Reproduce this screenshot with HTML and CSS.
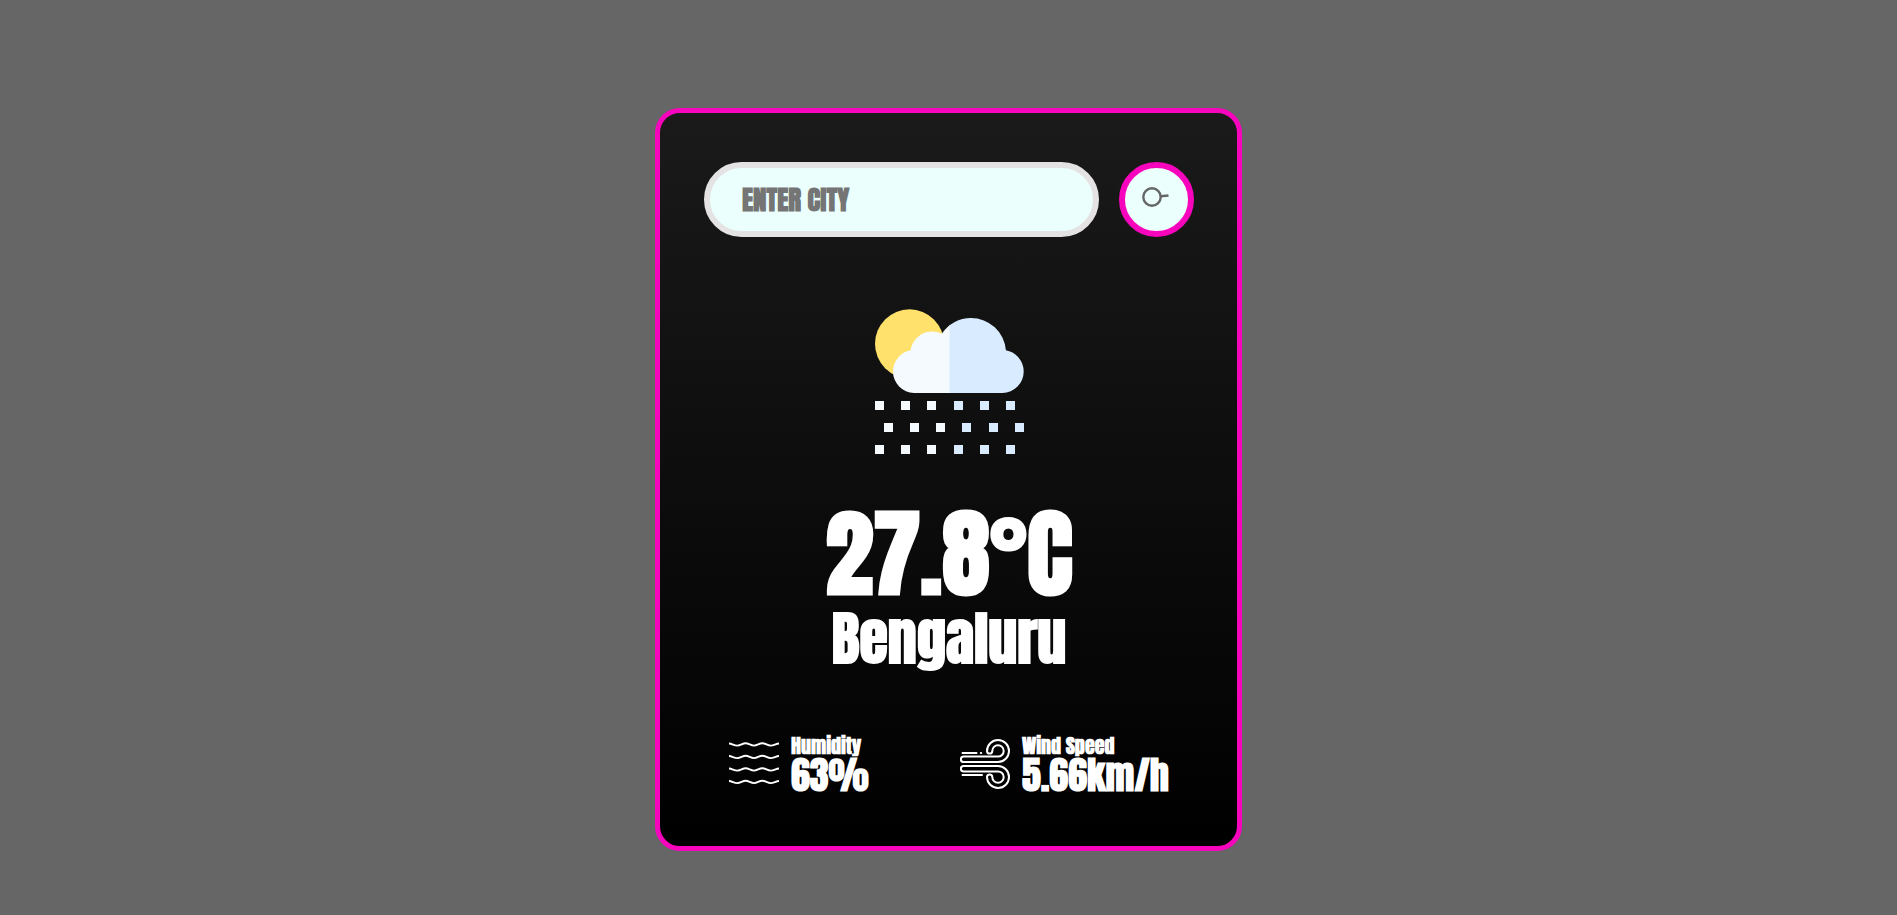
FILE: index.html
```
<!DOCTYPE html>
<html lang="en">
<head>
<meta charset="utf-8">
<title>Weather</title>
<link rel="stylesheet" href="styles.css">
</head>
<body>
<main class="card">
  <form class="search">
    <input class="search-input" type="text" placeholder="ENTER CITY" aria-label="City" spellcheck="false">
    <button class="search-button" type="button" aria-label="Search">
      <svg class="search-icon" viewBox="0 0 27 20" aria-hidden="true">
        <circle cx="10" cy="10" r="8.700"/>
        <path d="M18.700 9.300L26.500 8.500"/>
      </svg>
    </button>
  </form>
  <section class="weather">
    <svg class="weather-icon" viewBox="0 0 149 150" aria-hidden="true">
      <defs>
        <clipPath id="cloud">
          <circle cx="39.500" cy="62.500" r="21.500"/>
          <circle cx="57" cy="44" r="21.500"/>
          <circle cx="96" cy="44" r="35"/>
          <circle cx="127.200" cy="62.500" r="21.500"/>
          <rect x="39" y="42" width="88.500" height="42"/>
        </clipPath>
      </defs>
      <circle cx="34.500" cy="34.800" r="34.500" fill="#ffe16b"/>
      <g clip-path="url(#cloud)">
        <rect width="75" height="90" fill="#f5fafe"/>
        <rect x="74.500" width="75" height="90" fill="#d9ecff"/>
      </g>
      <path fill="#f5fafe" d="M0 92h9v9H0zM26 92h9v9h-9zM52 92h9v9h-9zM9 114h9v9H9zM35 114h9v9h-9zM61 114h9v9h-9zM0 136h9v9H0zM26 136h9v9h-9zM52 136h9v9h-9z"/>
      <path fill="#d9ecff" d="M79 92h9v9h-9zM105 92h9v9h-9zM131 92h9v9h-9zM87 114h9v9h-9zM114 114h9v9h-9zM140 114h9v9h-9zM79 136h9v9h-9zM105 136h9v9h-9zM131 136h9v9h-9z"/>
    </svg>
    <h1 class="temp">27.8°C</h1>
    <h2 class="city">Bengaluru</h2>
  </section>
  <section class="details">
    <div class="detail">
      <svg class="detail-icon" viewBox="0 0 50 50" aria-hidden="true">
        <g fill="none" stroke="#fff" stroke-width="1.900">
          <path id="wave" d="M0 4.500C3 4.500 5 6.600 8.300 6.600S13.500 4.300 16.600 4.300S21.700 6.600 25 6.600S30 4.300 33.300 4.300S38.400 6.600 41.600 6.600S47 4.500 50 4.500"/>
          <use href="#wave" y="12.500"/><use href="#wave" y="25"/><use href="#wave" y="37.500"/>
        </g>
      </svg>
      <div><p class="label">Humidity</p><p class="value">63%</p></div>
    </div>
    <div class="detail">
      <svg class="detail-icon" viewBox="0 0 50 50" aria-hidden="true">
        <g fill="none" stroke="#fff" stroke-width="2" stroke-linecap="round" stroke-linejoin="round">
          <path id="gust" d="M38 23H3.600A2.700 2.700 0 0 1 3.600 17.600H38A5.700 5.700 0 1 0 32.300 11.900C32.300 15.500 27 15.500 27 11.900A11 11 0 1 1 38 23"/>
          <use href="#gust" transform="matrix(1 0 0 -1 0 50)"/>
          <path d="M2.500 14H16.500M20.800 14H21.200M2.500 36H22"/>
        </g>
      </svg>
      <div><p class="label">Wind Speed</p><p class="value">5.66km/h</p></div>
    </div>
  </section>
</main>
</body>
</html>
```
FILE: styles.css
```
* { box-sizing: border-box; margin: 0; padding: 0; }
body {
  min-height: 100vh;
  padding: 108px 24px 48px;
  background: #666;
  color: #fff;
  font-family: Impact, "Anton", "Roboto Condensed", "Liberation Sans Narrow", sans-serif;
  font-weight: 700;
}
.card {
  width: 100%;
  max-width: 587px;
  margin: 0 auto;
  padding: 49px 43px 53px 44px;
  border: 5px solid #f705bd;
  border-radius: 25px;
  background: linear-gradient(#1a1a1a, #000);
  text-align: center;
}
.search { display: flex; align-items: center; gap: 20px; }
.search-input {
  flex: 1;
  min-width: 0;
  height: 75px;
  padding: 0 32px;
  border: 6px solid #e4e2e2;
  border-radius: 38px;
  background: #ebfffc;
  color: #555;
  font: inherit;
  font-size: 27px;
}
.search-input::placeholder { color: #757575; opacity: 1; }
.search-button {
  display: grid;
  place-items: center;
  width: 75px;
  height: 75px;
  padding: 0 3px 5px 0;
  border: 6px solid #f705bd;
  border-radius: 50%;
  background: #ebfffc;
}
.search-icon { width: 27px; height: 20px; fill: none; stroke: #666; stroke-width: 2.4; }
.weather-icon { display: block; width: 149px; height: 150px; margin: 72px auto 0; }
.temp { margin-top: 35px; font-size: 96px; line-height: 120px; }
.city { font-size: 58px; line-height: 50px; }
.details { display: flex; justify-content: space-between; margin-top: 71px; padding: 0 25px; text-align: left; }
.detail { display: flex; align-items: center; gap: 12px; }
.detail-icon { width: 50px; height: 50px; }
.label { font-size: 20px; line-height: 22px; }
.value { font-size: 38px; line-height: 36px; }
```
